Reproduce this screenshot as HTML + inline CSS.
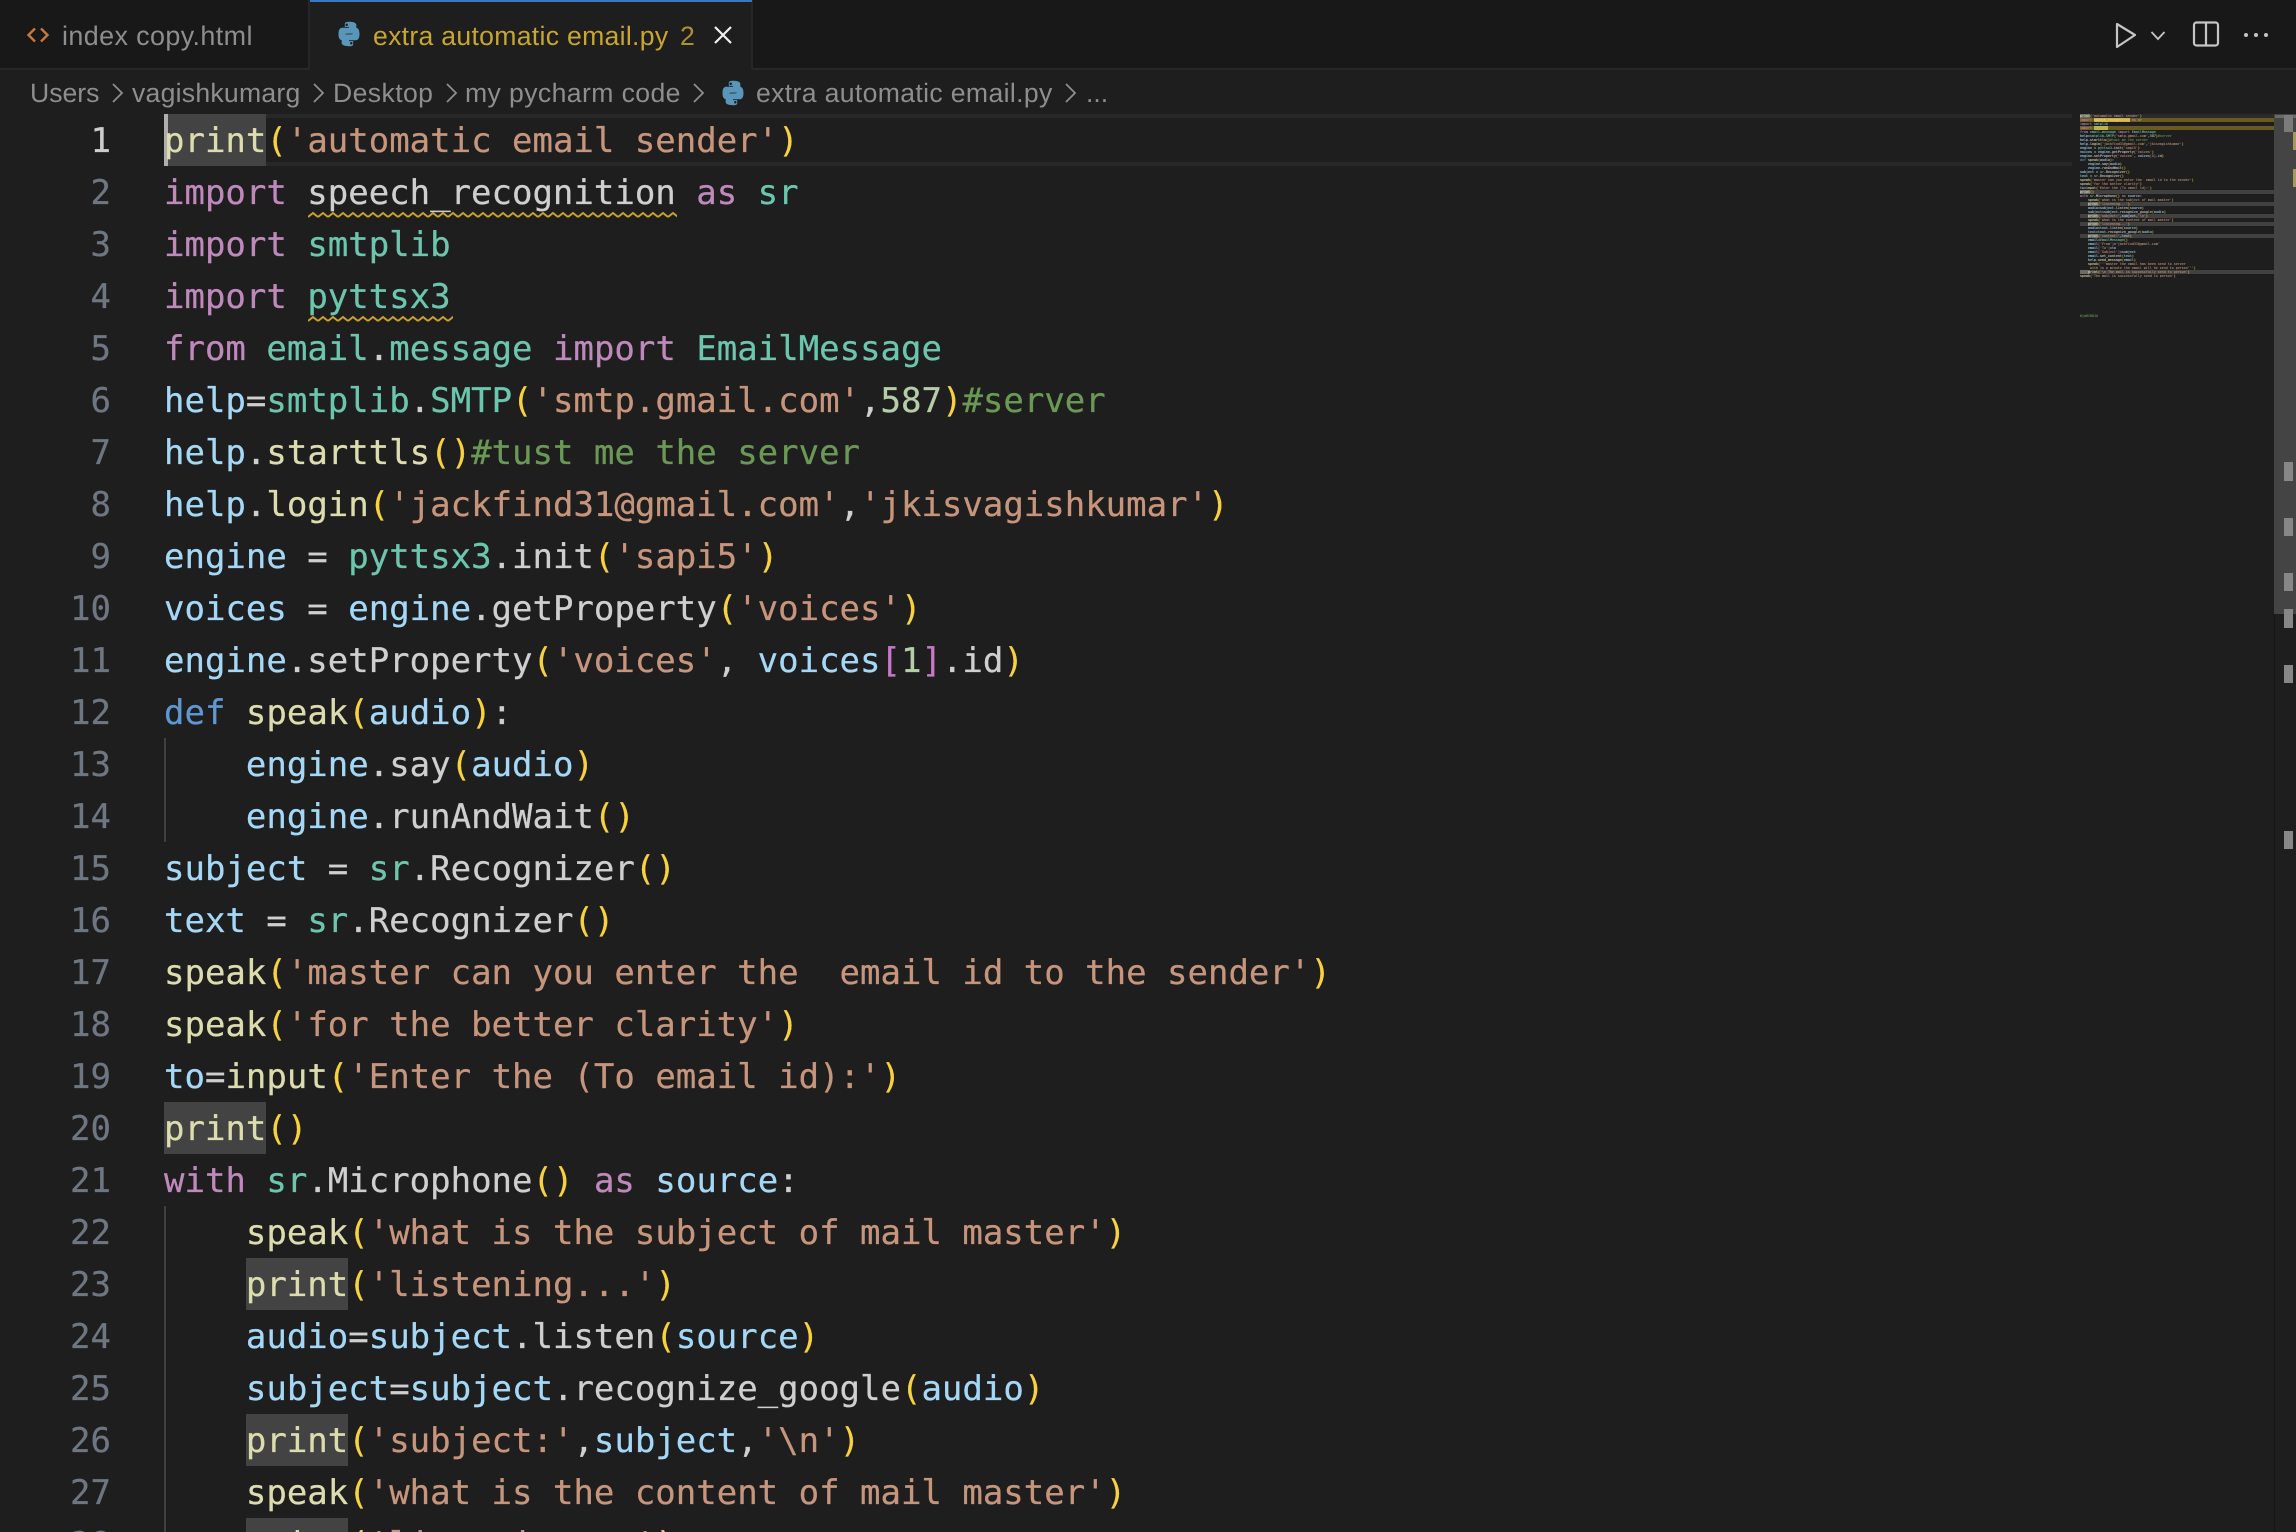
<!DOCTYPE html>
<html lang="en"><head><meta charset="utf-8"><title>extra automatic email.py</title>
<style>
html,body{margin:0;padding:0;background:#1e1e1e;width:2296px;height:1532px;overflow:hidden}
#r{position:relative;width:2296px;height:1532px;overflow:hidden;background:#1e1e1e}
.a{position:absolute}
.u{position:absolute;font-family:"Liberation Sans",Arial,sans-serif;font-size:26.6px;line-height:36px;white-space:pre;color:#8e8e8e;text-rendering:geometricPrecision}
#code,#nums{position:absolute;top:115px;font-family:"DejaVu Sans Mono","Liberation Mono",monospace;font-size:34px;line-height:52px;text-rendering:geometricPrecision;color:#cfcfcf;-webkit-text-stroke:.25px}
#code{left:164px;height:1417px;overflow:hidden}
#nums{left:40px;width:71px;height:1417px;overflow:hidden;text-align:right;color:#6e7681}
#code div,#nums div{height:52px;white-space:pre}
.k{color:#bf89bb}.b{color:#5f97d2}.m{color:#6cc6ae}.v{color:#a4d8f6}.f{color:#dcdcae}.s{color:#c6957c}.c{color:#6a9955}.p{color:#f7d23e}.q{color:#c678c4}.n{color:#b5cea8}
.hl{position:absolute;background:#434343;height:52px;width:102px}
.g{position:absolute;background:#404040;width:2px}
.mk{position:absolute;left:2284px;width:9px;background:#878787}
.ym{position:absolute;left:2293px;width:3px;background:#a89a55}
#mini{position:absolute;left:2080px;top:114px;width:194px;height:320px;overflow:hidden;font-family:"DejaVu Sans Mono",monospace;font-size:3.32px;line-height:4px;white-space:pre;color:#d4d4d4;opacity:.85;-webkit-text-stroke:.12px}
#mini div{height:4px}
.mr{position:absolute;left:2080px;width:194px;height:4px;background:#414141}
.mb{position:absolute;height:4px;width:10px;background:#6a6a6a}
</style></head><body><div id="r">

<!-- tab bar -->
<div class="a" style="left:0;top:0;width:2296px;height:68px;background:#181818"></div>
<div class="a" style="left:0;top:68px;width:2296px;height:2px;background:#282828"></div>
<div class="a" style="left:308px;top:0;width:2px;height:70px;background:#262626"></div>
<div class="a" style="left:751px;top:0;width:2px;height:70px;background:#262626"></div>
<div class="a" style="left:310px;top:0;width:441px;height:70px;background:#1e1e1e"></div>
<div class="a" style="left:310px;top:0;width:442px;height:2px;background:#3a76c4"></div>

<svg class="a" style="left:26px;top:26px" width="24" height="18" viewBox="0 0 24 18" fill="none" stroke="#c9773a" stroke-width="2.4"><path d="M9 2.5 2.5 9 9 15.5"/><path d="M15 2.5 21.5 9 15 15.5"/></svg>
<div class="u" style="left:62px;top:18px;font-size:26.9px;letter-spacing:.4px">index copy.html</div>

<svg class="a" style="left:335px;top:20px" width="28" height="28" viewBox="0 0 16 16" fill="#5a96ba"><path fill-rule="evenodd" d="M7.9 1C5.5 1 5.6 2.1 5.6 2.1V3.9h2.4v.5H4.2S2 4.1 2 7.9c0 3.8 1.9 3.6 1.9 3.6h1.2V9.8s-.1-2 1.9-2h3.3s1.9 0 1.9-1.8V2.9S12.5 1 7.9 1zM6.7 2c.4 0 .7.3.7.7s-.3.7-.7.7-.7-.3-.7-.7.3-.7.7-.7z"/><path fill-rule="evenodd" transform="rotate(180 8 8)" d="M7.9 1C5.5 1 5.6 2.1 5.6 2.1V3.9h2.4v.5H4.2S2 4.1 2 7.9c0 3.8 1.9 3.6 1.9 3.6h1.2V9.8s-.1-2 1.9-2h3.3s1.9 0 1.9-1.8V2.9S12.5 1 7.9 1zM6.7 2c.4 0 .7.3.7.7s-.3.7-.7.7-.7-.3-.7-.7.3-.7.7-.7z"/></svg>
<div class="u" style="left:373px;top:18px;color:#c7a631;letter-spacing:.3px">extra automatic email.py</div>
<div class="u" style="left:680px;top:18px;color:#ab922f">2</div>
<svg class="a" style="left:712px;top:25px" width="22" height="20" viewBox="0 0 22 20" stroke="#f0f0f0" stroke-width="2.2" fill="none"><path d="M3 2 19 18M19 2 3 18"/></svg>

<!-- right actions -->
<svg class="a" style="left:2112px;top:20px" width="28" height="30" viewBox="0 0 28 30" fill="none" stroke="#c5c5c5" stroke-width="2.2" stroke-linejoin="round"><path d="M5 4 23 15 5 27z"/></svg>
<svg class="a" style="left:2150px;top:30px" width="16" height="11" viewBox="0 0 16 11" fill="none" stroke="#c5c5c5" stroke-width="1.8"><path d="M1.5 2 8 9 14.5 2"/></svg>
<svg class="a" style="left:2192px;top:20px" width="28" height="28" viewBox="0 0 28 28" fill="none" stroke="#c5c5c5" stroke-width="2.2"><rect x="2" y="2.5" width="24" height="23" rx="2.5"/><path d="M14 2.5v23"/></svg>
<svg class="a" style="left:2242px;top:30px" width="28" height="10" viewBox="0 0 28 10" fill="#c5c5c5"><circle cx="4" cy="5" r="2"/><circle cx="14" cy="5" r="2"/><circle cx="24" cy="5" r="2"/></svg>

<!-- breadcrumbs -->
<div class="u" style="left:30px;top:75px">Users</div>
<svg class="a" style="left:111px;top:82px" width="13" height="22" viewBox="0 0 13 22" fill="none" stroke="#8e8e8e" stroke-width="1.8"><path d="M2 2 11 11 2 20"/></svg>
<div class="u" style="left:132px;top:75px;letter-spacing:.25px">vagishkumarg</div>
<svg class="a" style="left:312px;top:82px" width="13" height="22" viewBox="0 0 13 22" fill="none" stroke="#8e8e8e" stroke-width="1.8"><path d="M2 2 11 11 2 20"/></svg>
<div class="u" style="left:333px;top:75px;letter-spacing:.4px">Desktop</div>
<svg class="a" style="left:445px;top:82px" width="13" height="22" viewBox="0 0 13 22" fill="none" stroke="#8e8e8e" stroke-width="1.8"><path d="M2 2 11 11 2 20"/></svg>
<div class="u" style="left:465px;top:75px;letter-spacing:.4px">my pycharm code</div>
<svg class="a" style="left:692px;top:82px" width="13" height="22" viewBox="0 0 13 22" fill="none" stroke="#8e8e8e" stroke-width="1.8"><path d="M2 2 11 11 2 20"/></svg>
<svg class="a" style="left:719px;top:79px" width="28" height="28" viewBox="0 0 16 16" fill="#5a96ba"><path fill-rule="evenodd" d="M7.9 1C5.5 1 5.6 2.1 5.6 2.1V3.9h2.4v.5H4.2S2 4.1 2 7.9c0 3.8 1.9 3.6 1.9 3.6h1.2V9.8s-.1-2 1.9-2h3.3s1.9 0 1.9-1.8V2.9S12.5 1 7.9 1zM6.7 2c.4 0 .7.3.7.7s-.3.7-.7.7-.7-.3-.7-.7.3-.7.7-.7z"/><path fill-rule="evenodd" transform="rotate(180 8 8)" d="M7.9 1C5.5 1 5.6 2.1 5.6 2.1V3.9h2.4v.5H4.2S2 4.1 2 7.9c0 3.8 1.9 3.6 1.9 3.6h1.2V9.8s-.1-2 1.9-2h3.3s1.9 0 1.9-1.8V2.9S12.5 1 7.9 1zM6.7 2c.4 0 .7.3.7.7s-.3.7-.7.7-.7-.3-.7-.7.3-.7.7-.7z"/></svg>
<div class="u" style="left:756px;top:75px;letter-spacing:.35px">extra automatic email.py</div>
<svg class="a" style="left:1064px;top:82px" width="13" height="22" viewBox="0 0 13 22" fill="none" stroke="#8e8e8e" stroke-width="1.8"><path d="M2 2 11 11 2 20"/></svg>
<div class="u" style="left:1086px;top:75px">...</div>

<!-- current line -->
<div class="a" style="left:164px;top:114px;width:1908px;height:52px;box-sizing:border-box;border-top:4px solid #282828;border-bottom:4px solid #282828"></div>

<!-- occurrence highlights -->
<div class="hl" style="left:164px;top:114px"></div>
<div class="a" style="left:164px;top:114px;width:4px;height:52px;background:#aeafad"></div>
<div class="hl" style="left:164px;top:1102px"></div>
<div class="hl" style="left:246px;top:1258px"></div>
<div class="hl" style="left:246px;top:1414px"></div>
<div class="hl" style="left:246px;top:1518px"></div>

<!-- indent guides -->
<div class="g" style="left:164px;top:738px;height:104px"></div>
<div class="g" style="left:164px;top:1206px;height:326px"></div>

<!-- line numbers -->
<div id="nums"><div style="color:#cccccc">1</div><div>2</div><div>3</div><div>4</div><div>5</div><div>6</div><div>7</div><div>8</div><div>9</div><div>10</div><div>11</div><div>12</div><div>13</div><div>14</div><div>15</div><div>16</div><div>17</div><div>18</div><div>19</div><div>20</div><div>21</div><div>22</div><div>23</div><div>24</div><div>25</div><div>26</div><div>27</div><div>28</div></div>

<!-- code -->
<div id="code">
<div><span class="f">print</span><span class="p">(</span><span class="s">'automatic email sender'</span><span class="p">)</span></div>
<div><span class="k">import</span> speech_recognition <span class="k">as</span> <span class="m">sr</span></div>
<div><span class="k">import</span> <span class="m">smtplib</span></div>
<div><span class="k">import</span> <span class="m">pyttsx3</span></div>
<div><span class="k">from</span> <span class="m">email</span>.<span class="m">message</span> <span class="k">import</span> <span class="m">EmailMessage</span></div>
<div><span class="v">help</span>=<span class="m">smtplib</span>.<span class="m">SMTP</span><span class="p">(</span><span class="s">'smtp.gmail.com'</span>,<span class="n">587</span><span class="p">)</span><span class="c">#server</span></div>
<div><span class="v">help</span>.<span class="f">starttls</span><span class="p">()</span><span class="c">#tust me the server</span></div>
<div><span class="v">help</span>.<span class="f">login</span><span class="p">(</span><span class="s">'jackfind31@gmail.com'</span>,<span class="s">'jkisvagishkumar'</span><span class="p">)</span></div>
<div><span class="v">engine</span> = <span class="m">pyttsx3</span>.init<span class="p">(</span><span class="s">'sapi5'</span><span class="p">)</span></div>
<div><span class="v">voices</span> = <span class="v">engine</span>.getProperty<span class="p">(</span><span class="s">'voices'</span><span class="p">)</span></div>
<div><span class="v">engine</span>.setProperty<span class="p">(</span><span class="s">'voices'</span>, <span class="v">voices</span><span class="q">[</span><span class="n">1</span><span class="q">]</span>.id<span class="p">)</span></div>
<div><span class="b">def</span> <span class="f">speak</span><span class="p">(</span><span class="v">audio</span><span class="p">)</span>:</div>
<div>    <span class="v">engine</span>.say<span class="p">(</span><span class="v">audio</span><span class="p">)</span></div>
<div>    <span class="v">engine</span>.runAndWait<span class="p">()</span></div>
<div><span class="v">subject</span> = <span class="m">sr</span>.Recognizer<span class="p">()</span></div>
<div><span class="v">text</span> = <span class="m">sr</span>.Recognizer<span class="p">()</span></div>
<div><span class="f">speak</span><span class="p">(</span><span class="s">'master can you enter the  email id to the sender'</span><span class="p">)</span></div>
<div><span class="f">speak</span><span class="p">(</span><span class="s">'for the better clarity'</span><span class="p">)</span></div>
<div><span class="v">to</span>=<span class="f">input</span><span class="p">(</span><span class="s">'Enter the (To email id):'</span><span class="p">)</span></div>
<div><span class="f">print</span><span class="p">()</span></div>
<div><span class="k">with</span> <span class="m">sr</span>.Microphone<span class="p">()</span> <span class="k">as</span> <span class="v">source</span>:</div>
<div>    <span class="f">speak</span><span class="p">(</span><span class="s">'what is the subject of mail master'</span><span class="p">)</span></div>
<div>    <span class="f">print</span><span class="p">(</span><span class="s">'listening...'</span><span class="p">)</span></div>
<div>    <span class="v">audio</span>=<span class="v">subject</span>.listen<span class="p">(</span><span class="v">source</span><span class="p">)</span></div>
<div>    <span class="v">subject</span>=<span class="v">subject</span>.recognize_google<span class="p">(</span><span class="v">audio</span><span class="p">)</span></div>
<div>    <span class="f">print</span><span class="p">(</span><span class="s">'subject:'</span>,<span class="v">subject</span>,<span class="s">'\n'</span><span class="p">)</span></div>
<div>    <span class="f">speak</span><span class="p">(</span><span class="s">'what is the content of mail master'</span><span class="p">)</span></div>
<div>    <span class="f">print</span><span class="p">(</span><span class="s">'listening...'</span><span class="p">)</span></div>
</div>

<!-- squiggles -->
<svg class="a" style="left:308px;top:211px" width="369" height="8"><defs><pattern id="w" width="10" height="8" patternUnits="userSpaceOnUse"><path d="M0 6 5 2 10 6" fill="none" stroke="#c9a227" stroke-width="2"/></pattern></defs><rect width="369" height="8" fill="url(#w)"/></svg>
<svg class="a" style="left:308px;top:315px" width="145" height="8"><rect width="145" height="8" fill="url(#w)"/></svg>

<!-- minimap backgrounds -->
<div class="a" style="left:2080px;top:114px;width:194px;height:4px;background:#2a2a2a"></div>
<div class="mb" style="left:2080px;top:114px"></div>
<div class="mr" style="top:118px;background:#6a5a1f"></div>
<div class="a" style="left:2094px;top:118px;width:36px;height:4px;background:#d4ae2e"></div>
<div class="mr" style="top:126px;background:#6a5a1f"></div>
<div class="a" style="left:2094px;top:126px;width:14px;height:4px;background:#d4ae2e"></div>
<div class="mr" style="top:190px"></div><div class="mb" style="left:2080px;top:190px"></div>
<div class="mr" style="top:202px"></div><div class="mb" style="left:2088px;top:202px"></div>
<div class="mr" style="top:214px"></div><div class="mb" style="left:2088px;top:214px"></div>
<div class="mr" style="top:222px"></div><div class="mb" style="left:2088px;top:222px"></div>
<div class="mr" style="top:234px"></div><div class="mb" style="left:2088px;top:234px"></div>
<div class="mr" style="top:270px"></div><div class="mb" style="left:2080px;top:270px"></div>

<!-- minimap text -->
<div id="mini"><div><span class="f">print</span><span class="p">(</span><span class="s">'automatic email sender'</span><span class="p">)</span></div><div><span class="k">import</span> speech_recognition <span class="k">as</span> <span class="m">sr</span></div><div><span class="k">import</span> <span class="m">smtplib</span></div><div><span class="k">import</span> <span class="m">pyttsx3</span></div><div><span class="k">from</span> <span class="m">email</span>.<span class="m">message</span> <span class="k">import</span> <span class="m">EmailMessage</span></div><div><span class="v">help</span>=<span class="m">smtplib</span>.<span class="m">SMTP</span><span class="p">(</span><span class="s">'smtp.gmail.com'</span>,<span class="n">587</span><span class="p">)</span><span class="c">#server</span></div><div><span class="v">help</span>.<span class="f">starttls</span><span class="p">()</span><span class="c">#tust me the server</span></div><div><span class="v">help</span>.<span class="f">login</span><span class="p">(</span><span class="s">'jackfind31@gmail.com'</span>,<span class="s">'jkisvagishkumar'</span><span class="p">)</span></div><div><span class="v">engine</span> = <span class="m">pyttsx3</span>.init<span class="p">(</span><span class="s">'sapi5'</span><span class="p">)</span></div><div><span class="v">voices</span> = <span class="v">engine</span>.getProperty<span class="p">(</span><span class="s">'voices'</span><span class="p">)</span></div><div><span class="v">engine</span>.setProperty<span class="p">(</span><span class="s">'voices'</span>, <span class="v">voices</span><span class="q">[</span><span class="n">1</span><span class="q">]</span>.id<span class="p">)</span></div><div><span class="b">def</span> <span class="f">speak</span><span class="p">(</span><span class="v">audio</span><span class="p">)</span>:</div><div>    <span class="v">engine</span>.say<span class="p">(</span><span class="v">audio</span><span class="p">)</span></div><div>    <span class="v">engine</span>.runAndWait<span class="p">()</span></div><div><span class="v">subject</span> = <span class="m">sr</span>.Recognizer<span class="p">()</span></div><div><span class="v">text</span> = <span class="m">sr</span>.Recognizer<span class="p">()</span></div><div><span class="f">speak</span><span class="p">(</span><span class="s">'master can you enter the  email id to the sender'</span><span class="p">)</span></div><div><span class="f">speak</span><span class="p">(</span><span class="s">'for the better clarity'</span><span class="p">)</span></div><div><span class="v">to</span>=<span class="f">input</span><span class="p">(</span><span class="s">'Enter the (To email id):'</span><span class="p">)</span></div><div><span class="f">print</span><span class="p">()</span></div><div><span class="k">with</span> <span class="m">sr</span>.Microphone<span class="p">()</span> <span class="k">as</span> <span class="v">source</span>:</div><div>    <span class="f">speak</span><span class="p">(</span><span class="s">'what is the subject of mail master'</span><span class="p">)</span></div><div>    <span class="f">print</span><span class="p">(</span><span class="s">'listening...'</span><span class="p">)</span></div><div>    <span class="v">audio</span>=<span class="v">subject</span>.listen<span class="p">(</span><span class="v">source</span><span class="p">)</span></div><div>    <span class="v">subject</span>=<span class="v">subject</span>.recognize_google<span class="p">(</span><span class="v">audio</span><span class="p">)</span></div><div>    <span class="f">print</span><span class="p">(</span><span class="s">'subject:'</span>,<span class="v">subject</span>,<span class="s">'\n'</span><span class="p">)</span></div><div>    <span class="f">speak</span><span class="p">(</span><span class="s">'what is the content of mail master'</span><span class="p">)</span></div><div>    <span class="f">print</span><span class="p">(</span><span class="s">'listening...'</span><span class="p">)</span></div><div>    <span class="v">audio</span>=<span class="v">text</span>.listen<span class="p">(</span><span class="v">source</span><span class="p">)</span></div><div>    <span class="v">text</span>=<span class="v">text</span>.recognize_google<span class="p">(</span><span class="v">audio</span><span class="p">)</span></div><div>    <span class="f">print</span><span class="p">(</span><span class="s">'content:'</span>,<span class="v">text</span><span class="p">)</span></div><div>    <span class="v">email</span>=<span class="m">EmailMessage</span><span class="p">()</span></div><div>    <span class="v">email</span><span class="q">[</span><span class="s">'From'</span><span class="q">]</span>=<span class="s">'jackfind31@gmail.com'</span></div><div>    <span class="v">email</span><span class="q">[</span><span class="s">'To'</span><span class="q">]</span>=<span class="v">to</span></div><div>    <span class="v">email</span><span class="q">[</span><span class="s">'Subject'</span><span class="q">]</span>=<span class="v">subject</span></div><div>    <span class="v">email</span>.set_content<span class="p">(</span><span class="v">text</span><span class="p">)</span></div><div>    <span class="v">help</span>.<span class="f">send_message</span><span class="p">(</span><span class="v">email</span><span class="p">)</span></div><div>    <span class="f">speak</span><span class="p">(</span><span class="s">'''master the email has been send to server</span></div><div><span class="s">     with in a minute the email will be send to person'''</span><span class="p">)</span></div><div>    <span class="f">print</span><span class="p">(</span><span class="s">'\n The mail is successfully send to person'</span><span class="p">)</span></div><div><span class="f">speak</span><span class="p">(</span><span class="s">'The mail is successfully send to person'</span><span class="p">)</span></div><div> </div><div> </div><div> </div><div> </div><div> </div><div> </div><div> </div><div> </div><div> </div><div><span class="c">#jaHIHDJA</span></div></div>

<!-- scrollbar -->
<div class="a" style="left:2274px;top:114px;width:1px;height:1418px;background:#161616"></div>
<div class="a" style="left:2274px;top:114px;width:22px;height:500px;background:#444444"></div>
<div class="a" style="left:2275px;top:115px;width:21px;height:3px;background:#6a6a6a"></div>
<div class="a" style="left:2284px;top:115px;width:9px;height:17px;background:#7b7b7b"></div>
<div class="ym" style="top:132px;height:18px"></div>
<div class="ym" style="top:169px;height:18px"></div>
<div class="mk" style="top:462px;height:19px"></div>
<div class="mk" style="top:518px;height:18px"></div>
<div class="mk" style="top:573px;height:18px"></div>
<div class="mk" style="top:609px;height:19px"></div>
<div class="mk" style="top:665px;height:18px"></div>
<div class="mk" style="top:831px;height:18px"></div>

</div></body></html>
